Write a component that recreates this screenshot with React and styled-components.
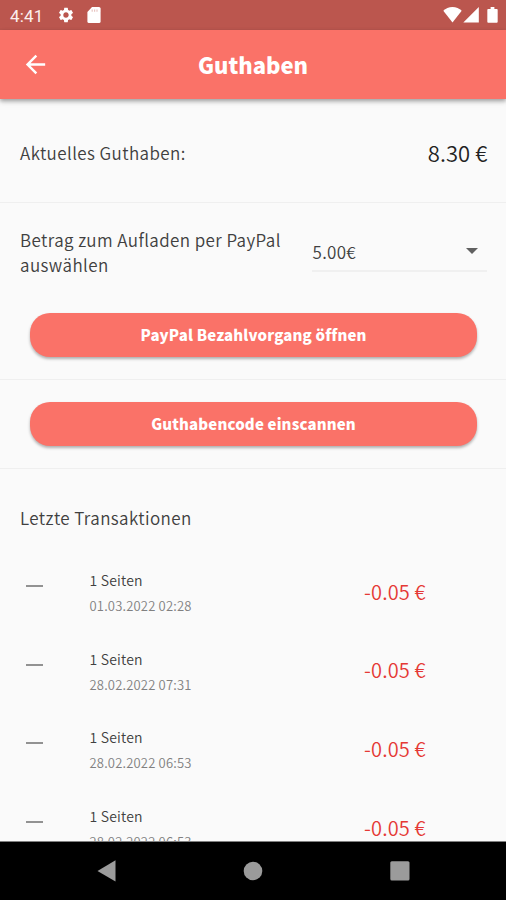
import React from 'react';
import styled, { createGlobalStyle } from 'styled-components';

const GlobalStyle = createGlobalStyle`
  * { box-sizing: border-box; }
  body { margin: 0; background: #000; }
`;

const Screen = styled.div`
  width: 506px;
  height: 900px;
  display: flex;
  flex-direction: column;
  overflow: hidden;
  background: #fafafa;
  color: #404040;
  font-family: "Noto Sans CJK SC", "Noto Sans", sans-serif;
`;

const StatusBar = styled.div`
  flex: none;
  height: 30px;
  display: flex;
  align-items: center;
  justify-content: space-between;
  padding: 0 8px 0 10px;
  background: #bb564e;
  color: #fff;
`;

const StatusGroup = styled.div`
  display: flex;
  align-items: center;
`;

const Clock = styled.span`
  width: 47px;
  padding-top: 2px;
  font: 400 17px/20px Roboto, sans-serif;
  letter-spacing: 0.2px;
  color: #fbeeed;
`;

const Icon = styled.svg`
  display: block;
  flex: none;
  fill: currentColor;
  width: ${p => p.$w}px;
  height: ${p => p.$h || p.$w}px;
  margin-left: ${p => p.$gap || 0}px;
`;

const AppBar = styled.header`
  flex: none;
  height: 69px;
  display: grid;
  grid-template-columns: 70px 1fr 70px;
  align-items: center;
  background: #fa7268;
  color: #fff;
  box-shadow: 0 2px 4px rgba(0, 0, 0, 0.3), 0 3px 6px rgba(0, 0, 0, 0.1);
  z-index: 1;
`;

const BackButton = styled.button`
  display: flex;
  align-items: center;
  justify-content: center;
  height: 48px;
  padding: 0;
  border: 0;
  background: none;
  color: inherit;
`;

const Title = styled.h1`
  margin: 0;
  padding-bottom: 1px;
  text-align: center;
  font-size: 22px;
  line-height: 30px;
  font-weight: 900;
`;

const Content = styled.main`
  flex: 1;
  min-height: 0;
  overflow: hidden;
`;

const Section = styled.section`
  height: ${p => p.$height}px;
  padding-top: ${p => p.$top || 0}px;
  border-bottom: 1px solid #efefef;
`;

const BalanceRow = styled.div`
  display: flex;
  align-items: center;
  justify-content: space-between;
  padding: 0 18.5px 0 20px;
`;

const Label = styled.span`
  font-size: 17px;
  line-height: 25px;
  font-weight: 350;
  letter-spacing: 0.41px;
`;

const Balance = styled.span`
  font-size: 22px;
  line-height: 32px;
  font-weight: 350;
  letter-spacing: 0.1px;
  color: #222;
`;

const TopUpRow = styled.div`
  display: grid;
  grid-template-columns: 292px 175px;
  height: 86px;
  padding: 0 19px 0 20px;
`;

const Select = styled.div`
  display: flex;
  align-items: center;
  justify-content: space-between;
  height: 45px;
  padding: 5px 9px 0 0.5px;
  border-bottom: 2px solid #f0f0f0;
  color: #606060;
`;

const SelectValue = styled(Label)`
  letter-spacing: 0.3px;
  color: #404040;
`;

const PrimaryButton = styled.button`
  display: block;
  width: 447px;
  height: 44px;
  margin-left: 30px;
  padding: 0;
  border: 0;
  border-radius: 20px;
  background: #fa7268;
  box-shadow: 0 2px 3px rgba(0, 0, 0, 0.3);
  color: #fff;
  font: 900 15px/22px "Noto Sans CJK SC", "Noto Sans", sans-serif;
  letter-spacing: 0.15px;
`;

const ListHeading = styled.h2`
  margin: 0;
  padding: 36px 20px 17px;
  font-size: 17px;
  line-height: 25px;
  font-weight: 350;
  letter-spacing: 0.4px;
`;

const Transaction = styled.article`
  height: 78.7px;
  display: grid;
  grid-template-columns: 69.5px 274.5px 1fr;
  padding: 0 20px;
`;

const MinusMark = styled.span`
  width: 17px;
  height: 2px;
  margin: 38px 0 0 6px;
  background: #929292;
`;

const Details = styled.div`
  display: flex;
  flex-direction: column;
  padding-top: 23px;
`;

const Pages = styled.span`
  font-size: 14px;
  line-height: 20px;
  font-weight: 350;
  letter-spacing: 0.2px;
`;

const Timestamp = styled.span`
  padding-top: 6px;
  font-size: 13px;
  line-height: 20px;
  font-weight: 350;
  letter-spacing: 0.19px;
  color: #808080;
`;

const Amount = styled.span`
  padding-top: 29.5px;
  font-size: 20px;
  line-height: 30px;
  font-weight: 350;
  letter-spacing: 0.15px;
  white-space: nowrap;
  color: #e53935;
`;

const NavBar = styled.nav`
  flex: none;
  height: 59px;
  display: flex;
  align-items: center;
  justify-content: space-between;
  padding: 0 96.5px 1px 95.5px;
  border-top: 1px solid #808080;
  background: #000;
  color: #9b9b9b;
`;

const transactions = [
  { pages: '1 Seiten', date: '01.03.2022 02:28', amount: '-0.05 €' },
  { pages: '1 Seiten', date: '28.02.2022 07:31', amount: '-0.05 €' },
  { pages: '1 Seiten', date: '28.02.2022 06:53', amount: '-0.05 €' },
  { pages: '1 Seiten', date: '28.02.2022 06:53', amount: '-0.05 €' },
];

export default function App() {
  return (
    <Screen>
      <GlobalStyle />
      <StatusBar>
        <StatusGroup>
          <Clock>4:41</Clock>
          <Icon $w={18} viewBox="0 0 24 24">
            <path d="M19.14 12.94c.04-.3.06-.61.06-.94 0-.32-.02-.64-.07-.94l2.03-1.58a.49.49 0 0 0 .12-.61l-1.92-3.32a.488.488 0 0 0-.59-.22l-2.39.96c-.5-.38-1.03-.7-1.62-.94l-.36-2.54a.484.484 0 0 0-.48-.41h-3.84c-.24 0-.43.17-.47.41l-.36 2.54c-.59.24-1.13.57-1.62.94l-2.39-.96c-.22-.08-.47 0-.59.22L2.74 8.87c-.12.21-.08.47.12.61l2.03 1.58c-.05.3-.09.63-.09.94s.02.64.07.94l-2.03 1.58a.49.49 0 0 0-.12.61l1.92 3.32c.12.22.37.29.59.22l2.39-.96c.5.38 1.03.7 1.62.94l.36 2.54c.05.24.24.41.48.41h3.84c.24 0 .44-.17.47-.41l.36-2.54c.59-.24 1.13-.56 1.62-.94l2.39.96c.22.08.47 0 .59-.22l1.92-3.32a.49.49 0 0 0-.12-.61l-2.01-1.58zM12 15.6A3.61 3.61 0 0 1 8.4 12c0-1.98 1.62-3.6 3.6-3.6s3.6 1.62 3.6 3.6-1.62 3.6-3.6 3.6z" />
          </Icon>
          <Icon $w={14} $h={16} $gap={11.5} viewBox="0 0 14 16">
            <path d="M5 0h7a1.6 1.6 0 0 1 1.6 1.6v12.8A1.6 1.6 0 0 1 12 16H2a1.6 1.6 0 0 1-1.6-1.6V5z" />
            <path d="M5.2 2.5v2.2M7.6 2.5v2.2M10 2.5v2.2" stroke="#bb564e" strokeOpacity="0.35" strokeWidth="1.2" />
          </Icon>
        </StatusGroup>
        <StatusGroup>
          <Icon $w={19} $h={16} viewBox="0 0 19 16">
            <path d="M0.3 3.8C2.6 1.4 5.9 0 9.5 0S16.4 1.4 18.7 3.8L9.5 15.5z" />
          </Icon>
          <Icon $w={16} $gap={1} viewBox="0 0 16 16">
            <path d="M15.8 0v15.5H0.3z" />
          </Icon>
          <Icon $w={11} $h={16} $gap={8} viewBox="0 0 11 17">
            <path d="M3.5 0h4v2H10a1 1 0 0 1 1 1v12.8a1 1 0 0 1-1 1H1a1 1 0 0 1-1-1V3a1 1 0 0 1 1-1h2.5z" />
          </Icon>
        </StatusGroup>
      </StatusBar>
      <AppBar>
        <BackButton aria-label="Zurück">
          <Icon $w={29} viewBox="0 0 24 24">
            <path d="M20 11H7.83l5.59-5.59L12 4l-8 8 8 8 1.41-1.41L7.83 13H20v-2z" />
          </Icon>
        </BackButton>
        <Title>Guthaben</Title>
      </AppBar>
      <Content>
        <Section $height={104} $top={37}>
          <BalanceRow>
            <Label>Aktuelles Guthaben:</Label>
            <Balance>8.30 €</Balance>
          </BalanceRow>
        </Section>
        <Section $height={177} $top={24}>
          <TopUpRow>
            <Label>Betrag zum Aufladen per PayPal auswählen</Label>
            <Select>
              <SelectValue>5.00€</SelectValue>
              <Icon $w={12} $h={6} viewBox="0 0 12 6">
                <path d="M0 0h12L6 6z" />
              </Icon>
            </Select>
          </TopUpRow>
          <PrimaryButton>PayPal Bezahlvorgang öffnen</PrimaryButton>
        </Section>
        <Section $height={89} $top={22}>
          <PrimaryButton>Guthabencode einscannen</PrimaryButton>
        </Section>
        <ListHeading>Letzte Transaktionen</ListHeading>
        {transactions.map((t, i) => (
          <Transaction key={i}>
            <MinusMark />
            <Details>
              <Pages>{t.pages}</Pages>
              <Timestamp>{t.date}</Timestamp>
            </Details>
            <Amount>{t.amount}</Amount>
          </Transaction>
        ))}
      </Content>
      <NavBar>
        <Icon $w={20} $h={22} viewBox="0 0 20 22">
          <path d="M19.5 0.3v21.2L1.5 11z" />
        </Icon>
        <Icon $w={20} viewBox="0 0 20 20">
          <circle cx="10" cy="10" r="9.3" />
        </Icon>
        <Icon $w={20} viewBox="0 0 20 20">
          <rect x="0.3" y="0.3" width="19.2" height="19.2" rx="1.5" />
        </Icon>
      </NavBar>
    </Screen>
  );
}
